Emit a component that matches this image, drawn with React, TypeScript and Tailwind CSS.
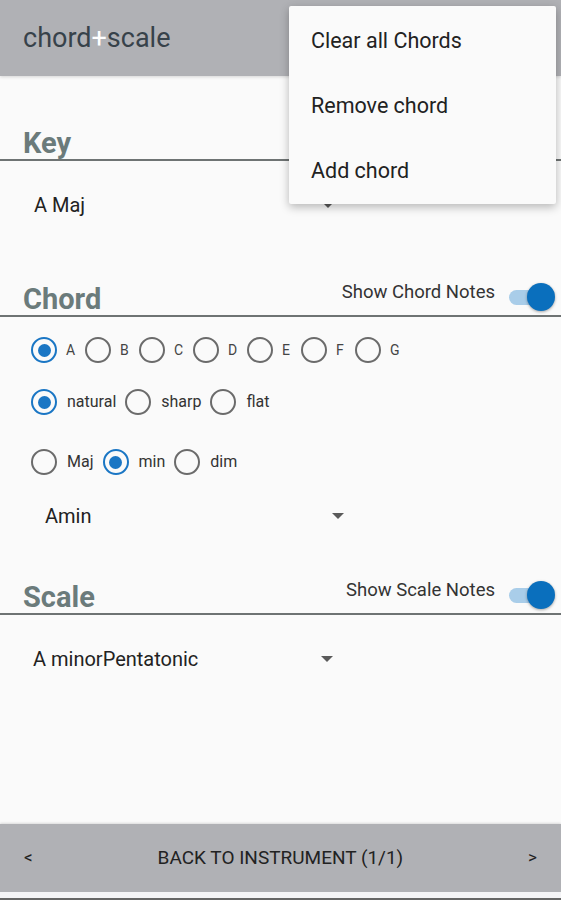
import React from 'react';

const font = { fontFamily: 'Roboto, "Noto Sans", sans-serif' };

function Radio({ checked, label, labelClass = 'text-[16px]', gap = 'ml-[10px]' }: { checked?: boolean; label: string; labelClass?: string; gap?: string }) {
  return (
    <div className="flex items-center">
      <span
        className={`flex h-[26px] w-[26px] items-center justify-center rounded-full border-[2.5px] ${checked ? 'border-[#1a76c4]' : 'border-[#6b6b6b]'}`}
      >
        {checked && <span className="h-[13px] w-[13px] rounded-full bg-[#1a76c4]" />}
      </span>
      <span className={`${gap} ${labelClass} text-[#333]`}>{label}</span>
    </div>
  );
}

function Toggle() {
  return (
    <div className="relative h-[28px] w-[46px]">
      <div className="absolute left-0 top-[7px] h-[15px] w-[40px] rounded-full bg-[#a9cde9]" />
      <div className="absolute right-0 top-0 h-[28px] w-[28px] rounded-full bg-[#0a6fbd] shadow-[0_1px_3px_rgba(0,0,0,0.35)]" />
    </div>
  );
}

function Caret() {
  return (
    <svg width="12" height="6" viewBox="0 0 12 6">
      <path d="M0 0 L12 0 L6 6 Z" fill="#5a5a5a" />
    </svg>
  );
}

function SectionHead({ title, toggle }: { title: string; toggle?: string }) {
  return (
    <div className="flex h-[36px] items-end justify-between border-b-2 border-[#6e7373] pl-[23px] pr-[6px]">
      <h2 className="-mb-[1px] text-[29px] font-bold leading-[34px] text-[#6b7b7b]">{title}</h2>
      {toggle && (
        <div className="mb-[4px] flex items-center gap-[14px]">
          <span className="-mt-[8px] text-[18.5px] text-[#333]">{toggle}</span>
          <Toggle />
        </div>
      )}
    </div>
  );
}

export default function App() {
  const notes = ['A', 'B', 'C', 'D', 'E', 'F', 'G'];
  return (
    <div className="relative flex h-[900px] w-[561px] flex-col overflow-hidden bg-[#fafafa]" style={font}>
      {/* header */}
      <div className="flex h-[76px] shrink-0 items-center bg-[#b0b1b5] pl-[23px] shadow-[0_1px_3px_rgba(0,0,0,0.15)]">
        <span className="text-[27px] text-[#37424a]">
          chord<span className="text-white">+</span>scale
        </span>
      </div>

      <div className="flex-1">
        {/* Key */}
        <div className="mt-[49px]">
          <SectionHead title="Key" />
          <div className="flex h-[88px] items-center pl-[34px]">
            <span className="w-[288px] text-[20px] text-[#222]">A Maj</span>
            <Caret />
          </div>
        </div>

        {/* Chord */}
        <div className="mt-[32px]">
          <SectionHead title="Chord" toggle="Show Chord Notes" />
          <div className="pl-[31px] pt-[20px]">
            <div className="flex items-center gap-[5px]">
              {notes.map((n, i) => (
                <Radio key={n} checked={i === 0} label={n} labelClass="text-[14px] w-[14px] text-[#444]" gap="ml-[9px]" />
              ))}
            </div>
            <div className="mt-[26px] flex items-center gap-[9px]">
              <Radio checked label="natural" />
              <Radio label="sharp" />
              <Radio label="flat" />
            </div>
            <div className="mt-[34px] flex items-center gap-[9px]">
              <Radio label="Maj" />
              <Radio checked label="min" />
              <Radio label="dim" />
            </div>
          </div>
          <div className="mt-[17px] flex h-[48px] items-center pl-[45px]">
            <span className="w-[287px] text-[20px] text-[#222]">Amin</span>
            <Caret />
          </div>
        </div>

        {/* Scale */}
        <div className="mt-[39px]">
          <SectionHead title="Scale" toggle="Show Scale Notes" />
          <div className="flex h-[88px] items-center pl-[33px]">
            <span className="w-[288px] text-[20px] text-[#222]">A minorPentatonic</span>
            <Caret />
          </div>
        </div>
      </div>

      {/* footer */}
      <div className="flex h-[68px] shrink-0 items-center justify-between bg-[#b0b1b5] px-[24px] text-[#222] shadow-[0_-1px_2px_rgba(0,0,0,0.12)]">
        <span className="text-[17px]">&lt;</span>
        <span className="text-[19px]">BACK TO INSTRUMENT (1/1)</span>
        <span className="text-[17px]">&gt;</span>
      </div>
      <div className="h-[6px] shrink-0 bg-[#f4f4f6]" />
      <div className="h-[2px] shrink-0 bg-[#666]" />

      {/* overflow menu */}
      <div className="absolute left-[289px] top-[6px] flex w-[267px] flex-col rounded-[2px] bg-[#fafafa] pb-[0px] pt-[3px] shadow-[0_3px_10px_rgba(0,0,0,0.28)]">
        {['Clear all Chords', 'Remove chord', 'Add chord'].map((t) => (
          <div key={t} className="flex h-[65px] items-center pl-[22px] text-[21.5px] text-[#222]">
            {t}
          </div>
        ))}
      </div>
    </div>
  );
}
